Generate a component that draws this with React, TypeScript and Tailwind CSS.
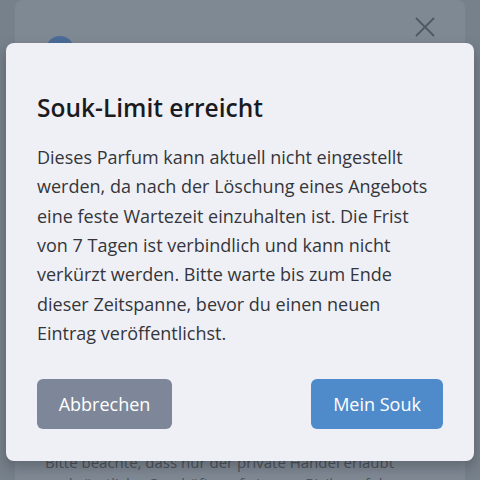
import React from 'react';

function App() {
    return (
        <div className="relative w-[480px] h-[480px] overflow-hidden bg-[#77818b]" style={{ fontFamily: '"Open Sans", sans-serif' }}>
            {/* dimmed page behind the dialog */}
            <div className="mx-[15px] h-full bg-[#7f8994] rounded-t-lg">
                <div className="flex items-start justify-between pl-[31px] pr-[29px] pt-[16px]">
                    <div className="mt-[20px] w-[28px] h-[28px] rounded-full bg-[#4b6c97]" />
                    <svg width="22" height="22" viewBox="0 0 22 22" stroke="#4f5963" strokeWidth="1.8" fill="none">
                        <path d="M2 2 L20 20 M20 2 L2 20" />
                    </svg>
                </div>
                <div className="pt-[388px] pl-[30px] text-[15px] leading-[21px] text-[#4d545c] whitespace-nowrap">
                    <p>Bitte beachte, dass nur der private Handel erlaubt</p>
                    <p>und sämtliche Geschäfte auf eigenes Risiko erfolgen.</p>
                </div>
            </div>

            <div className="absolute left-[6px] top-[43px] w-[468px] rounded-lg bg-[#eff0f5] shadow-[0_6px_14px_rgba(0,0,0,0.25)] px-[31px] pt-[47px] pb-[32px]">
                <h2 className="text-[24.5px] leading-[36px] font-semibold text-[#1b1b1f]">Souk-Limit erreicht</h2>
                <p className="mt-[17px] text-[18px] leading-[29.33px] text-[#34363b]">
                    Dieses Parfum kann aktuell nicht eingestellt werden, da nach der Löschung eines Angebots eine feste Wartezeit einzuhalten ist. Die Frist von 7 Tagen ist verbindlich und kann nicht verkürzt werden. Bitte warte bis zum Ende dieser Zeitspanne, bevor du einen neuen Eintrag veröffentlichst.
                </p>
                <div className="mt-[31px] flex justify-between">
                    <button className="h-[50px] w-[135px] rounded-md bg-[#7d8799] text-[18px] text-white">Abbrechen</button>
                    <button className="h-[50px] w-[132px] rounded-md bg-[#4f8bcb] text-[18px] text-white">Mein Souk</button>
                </div>
            </div>
        </div>
    );
}

export default App;
